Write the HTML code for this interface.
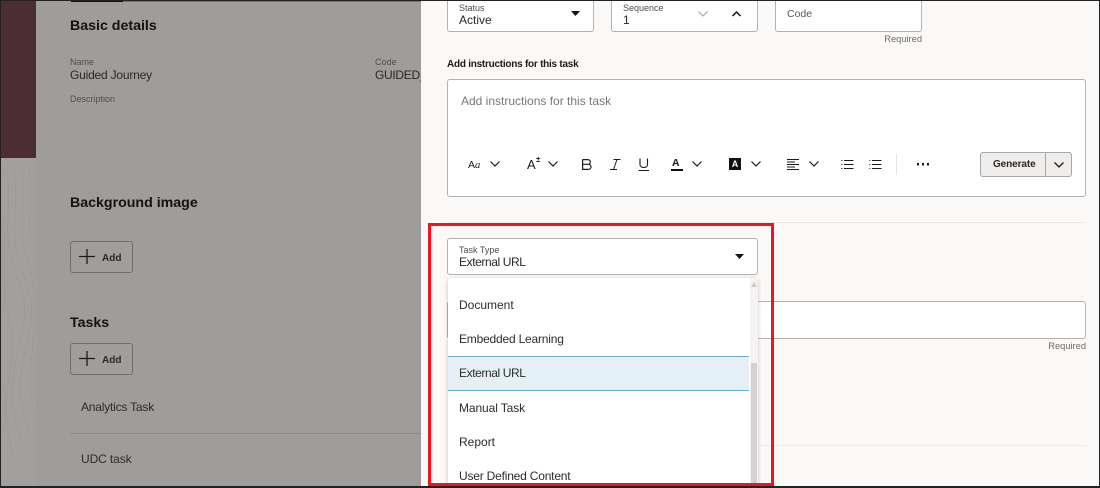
<!DOCTYPE html>
<html><head><meta charset="utf-8">
<style>
html,body{margin:0;padding:0}
body{width:1100px;height:488px;position:relative;overflow:hidden;background:#9e9d9b;font-family:"Liberation Sans",sans-serif;color:#2a2725}
.a{position:absolute;white-space:nowrap}
.box{position:absolute;box-sizing:border-box;background:#fff;border:1px solid #b4b2b0;border-radius:3px}
.h{font-size:14.2px;font-weight:bold;color:#141210}
.lb{font-size:9px;color:#514e4c}
.v{font-size:12px;color:#2a2725}
.sm{font-size:9.3px;color:#6e6b69}
.add{position:absolute;box-sizing:border-box;left:70px;width:63px;height:32px;border:1px solid #6f6d6b;border-radius:3px;background:#9f9e9c}
.add span{position:absolute;left:31px;top:11px;font-size:10px;font-weight:bold;color:#2a2826}
.i{position:absolute;left:459px;font-size:12px;color:#2f2c2a;white-space:nowrap}
svg{position:absolute;overflow:visible}
</style></head><body>
<!-- left rail -->
<div class="a" style="left:0;top:0;width:36px;height:488px;background:#a2a09e"></div>
<div class="a" style="left:0;top:0;width:36px;height:158px;background:#4b2e33"></div>
<svg style="left:1px;top:168px" width="35" height="320" fill="none" stroke="#959290" stroke-width=".7" opacity=".55">
<path d="M5 0C12 30 2 60 10 90S30 130 20 170 6 230 20 270"/>
<path d="M12 0C20 30 8 60 17 90S36 130 27 170 14 230 30 265"/>
<path d="M20 0C27 30 16 60 24 85S35 120 33 160 24 220 35 250"/>
<path d="M-1 40C6 70 0 100 4 130S16 170 8 210 6 250 12 290"/>
<path d="M28 0C32 30 26 50 30 75"/>
</svg>
<div class="a" style="left:36px;top:0;width:385px;height:488px;background:#9e9d9b"></div>
<!-- top tab line -->
<div class="a" style="left:71px;top:1px;width:350px;height:1px;background:#777573"></div>
<div class="a" style="left:71px;top:0;width:52px;height:2px;background:#111"></div>

<div class="a h" style="left:70px;top:18px">Basic details</div>
<div class="a lb" style="left:70px;top:57px">Name</div>
<div class="a v" style="left:70px;top:68px;letter-spacing:-.2px">Guided Journey</div>
<div class="a lb" style="left:375px;top:57px">Code</div>
<div class="a v" style="left:375px;top:68px;width:46px;overflow:hidden;letter-spacing:-.3px">GUIDED_JOURNEY</div>
<div class="a lb" style="left:70px;top:94px">Description</div>
<div class="a h" style="left:70px;top:195px">Background image</div>
<div class="add" style="top:241px"><svg width="16" height="16" style="left:8px;top:6px"><path d="M8 1V16M0 8.500H16" stroke="#1d1b1a" stroke-width="1.300" fill="none"/></svg><span>Add</span></div>
<div class="a h" style="left:70px;top:315px">Tasks</div>
<div class="add" style="top:343px"><svg width="16" height="16" style="left:8px;top:6px"><path d="M8 1V16M0 8.500H16" stroke="#1d1b1a" stroke-width="1.300" fill="none"/></svg><span>Add</span></div>
<div class="a v" style="left:81px;top:400px;color:#2e2b2a;letter-spacing:-.2px">Analytics Task</div>
<div class="a" style="left:70px;top:433px;width:351px;height:1px;background:#8c8a88"></div>
<div class="a v" style="left:81px;top:452px;color:#2e2b2a;letter-spacing:-.1px">UDC task</div>

<!-- right panel -->
<div class="a" style="left:421px;top:0;width:679px;height:488px;background:#fbf9f8"></div>

<div class="box" style="left:447px;top:-6px;width:147px;height:38px"></div>
<div class="a lb" style="left:459px;top:3px">Status</div>
<div class="a v" style="left:459px;top:13px">Active</div>
<svg style="left:571px;top:11px" width="9" height="5"><path d="M0 0H9L4.500 5Z" fill="#161412"/></svg>

<div class="box" style="left:611px;top:-6px;width:147px;height:38px"></div>
<div class="a lb" style="left:623px;top:3px">Sequence</div>
<div class="a v" style="left:623px;top:13px">1</div>
<svg style="left:698px;top:11px" width="10" height="6"><path d="M.5 .5L5 5L9.500 .5" stroke="#a5a3a1" fill="none"/></svg>
<svg style="left:732px;top:11px" width="9" height="6"><path d="M.5 5L4.500 1L8.500 5" stroke="#161412" stroke-width="1.500" fill="none"/></svg>

<div class="box" style="left:775px;top:-6px;width:147px;height:38px"></div>
<div class="a" style="left:787px;top:8px;font-size:10.500px;color:#5a5755">Code</div>
<div class="a sm" style="right:178px;top:34px">Required</div>

<div class="a" style="left:447px;top:59px;font-size:10px;font-weight:bold;color:#1d1b1a;letter-spacing:-.25px">Add instructions for this task</div>

<!-- editor -->
<div class="box" style="left:447px;top:79px;width:639px;height:118px"></div>
<div class="a" style="left:461px;top:94px;font-size:12px;color:#7a7775">Add instructions for this task</div>

<div class="a" style="left:468px;top:159px;font-size:10.500px;color:#1d1b1a">A<i style="font-family:'Liberation Serif'">a</i></div>
<svg style="left:490px;top:161px" width="10" height="6"><path d="M.5 .5L5 5L9.500 .5" stroke="#1d1b1a" stroke-width="1.200" fill="none"/></svg>
<div class="a" style="left:527px;top:157px;font-size:13px;color:#1d1b1a">A</div>
<div class="a" style="left:536px;top:155px;font-size:8px;font-weight:bold;color:#1d1b1a">±</div>
<svg style="left:548px;top:161px" width="10" height="6"><path d="M.5 .5L5 5L9.500 .5" stroke="#1d1b1a" stroke-width="1.200" fill="none"/></svg>
<svg style="left:582px;top:159px" width="10" height="11"><path d="M.6 .6H6C9 .6 9 5.300 6 5.300H.6M6 5.300C10 5.300 10 10.400 6 10.400H.6V.6" stroke="#1d1b1a" stroke-width="1.200" fill="none"/></svg>
<svg style="left:610px;top:159px" width="11" height="11"><path d="M3.500 .5H10.500M0 10.500H7M7 .5L3.500 10.500" stroke="#1d1b1a" fill="none"/></svg>
<svg style="left:638px;top:158px" width="12" height="13"><path d="M2 .5V6.500C2 10.500 9.500 10.500 9.500 6.500V.5M.5 12.500H11" stroke="#1d1b1a" stroke-width="1.100" fill="none"/></svg>
<div class="a" style="left:672px;top:157px;font-size:10.500px;color:#1d1b1a;font-weight:bold">A</div>
<div class="a" style="left:671px;top:169px;width:12px;height:2px;background:#111"></div>
<svg style="left:692px;top:161px" width="10" height="6"><path d="M.5 .5L5 5L9.500 .5" stroke="#1d1b1a" stroke-width="1.200" fill="none"/></svg>
<div class="a" style="left:729px;top:158px;width:12px;height:12px;background:#111;color:#fff;font-size:9px;font-weight:bold;text-align:center;line-height:12px">A</div>
<svg style="left:751px;top:161px" width="10" height="6"><path d="M.5 .5L5 5L9.500 .5" stroke="#1d1b1a" stroke-width="1.200" fill="none"/></svg>
<svg style="left:787px;top:159px" width="13" height="11"><path d="M0 .5H12M0 3H8M0 5.500H12M0 8H8M0 10.500H12" stroke="#1d1b1a" fill="none"/></svg>
<svg style="left:809px;top:161px" width="10" height="6"><path d="M.5 .5L5 5L9.500 .5" stroke="#1d1b1a" stroke-width="1.200" fill="none"/></svg>
<svg style="left:841px;top:160px" width="13" height="10"><path d="M3 .5H12.500M3 4.500H12.500M3 8.500H12.500" stroke="#1d1b1a" fill="none"/><path d="M0 .5H1.500M0 4.500H1.500M0 8.500H1.500" stroke="#55524f" fill="none"/></svg>
<svg style="left:869px;top:160px" width="13" height="10"><path d="M3 .5H12.500M3 4.500H12.500M3 8.500H12.500" stroke="#1d1b1a" fill="none"/><path d="M0 .5H1.500M0 4.500H1.500M0 8.500H1.500" stroke="#77746f" fill="none"/></svg>
<div class="a" style="left:896px;top:154px;width:1px;height:21px;background:#e6e4e2"></div>
<svg style="left:917px;top:163px" width="12" height="3"><path d="M0 0h2v2.500h-2zM5 0h2v2.500h-2zM10 0h2v2.500h-2z" fill="#1d1b1a"/></svg>
<div class="a" style="left:980px;top:152px;width:92px;height:25px;box-sizing:border-box;border:1px solid #a9a7a5;border-radius:3px;background:#eeedeb"></div>
<div class="a" style="left:1045px;top:152px;width:1px;height:25px;background:#a9a7a5"></div>
<div class="a" style="left:993px;top:159px;font-size:10px;font-weight:bold;color:#2a2725;letter-spacing:-.1px">Generate</div>
<svg style="left:1054px;top:162px" width="10" height="6"><path d="M.5 .5L5 5L9.500 .5" stroke="#1d1b1a" stroke-width="1.300" fill="none"/></svg>

<div class="a" style="left:447px;top:222px;width:639px;height:1px;background:#eceae8"></div>

<!-- task type -->
<div class="box" style="left:447px;top:238px;width:311px;height:37px"></div>
<div class="a lb" style="left:459px;top:245px">Task Type</div>
<div class="a v" style="left:459px;top:255px;letter-spacing:-.4px">External URL</div>
<svg style="left:735px;top:254px" width="9" height="5"><path d="M0 0H9L4.500 5Z" fill="#161412"/></svg>

<!-- underlying input -->
<div class="box" style="left:447px;top:301px;width:639px;height:38px"></div>
<div class="a sm" style="right:14px;top:341px">Required</div>
<div class="a" style="left:447px;top:445px;width:639px;height:1px;background:#eeecea"></div>

<!-- dropdown -->
<div class="a" style="left:448px;top:278px;width:310px;height:210px;background:#fff;border-radius:3px 3px 0 0;box-shadow:0 1px 4px rgba(0,0,0,.22)"></div>
<div class="a" style="left:750px;top:278px;width:8px;height:210px;background:#f4f3f2"></div>
<div class="a" style="left:751px;top:363px;width:6px;height:125px;background:#d3d2d0"></div>
<svg style="left:751px;top:282px" width="6" height="5"><path d="M0 5L3 0L6 5Z" fill="#cfcdcb"/></svg>
<div class="i" style="top:298px">Document</div>
<div class="i" style="top:332px;letter-spacing:-.2px">Embedded Learning</div>
<div class="a" style="left:448px;top:356px;width:301px;height:35px;box-sizing:border-box;background:#e4f0f6;border-top:1px solid #6aaccb;border-bottom:1px solid #6aaccb"></div>
<div class="i" style="top:366px;letter-spacing:-.4px">External URL</div>
<div class="i" style="top:401px;letter-spacing:-.1px">Manual Task</div>
<div class="i" style="top:435px">Report</div>
<div class="i" style="top:469px;letter-spacing:-.2px">User Defined Content</div>

<!-- red highlight -->
<div class="a" style="left:428px;top:223px;width:346px;height:263px;box-sizing:border-box;border:3px solid #ee1520"></div>

<!-- screenshot frame -->
<div class="a" style="left:0;top:0;width:1100px;height:488px;box-sizing:border-box;border:1px solid #222;border-width:1px 1px 2px 1px"></div>
</body></html>
